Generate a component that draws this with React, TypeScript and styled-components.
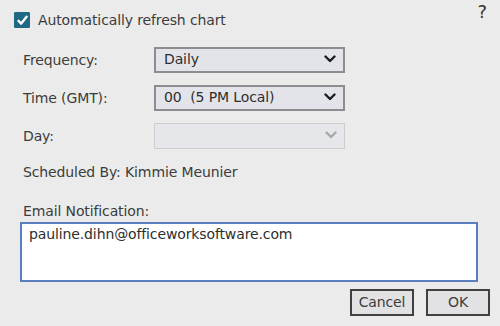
import React, { useState } from 'react';
import styled, { createGlobalStyle } from 'styled-components';

const GlobalStyle = createGlobalStyle`
  html, body {
    margin: 0;
    padding: 0;
    background: #ebebeb;
  }
  body {
    font-family: 'DejaVu Sans', Verdana, sans-serif;
    color: #3c3c3c;
    letter-spacing: -0.12px;
  }
`;

interface SelectProps {
  value: string;
  disabled?: boolean;
}

const Chevron: React.FC<{ disabled?: boolean }> = ({ disabled }) => (
  <svg width="12" height="8" viewBox="0 0 12 8">
    <polyline
      points="1.5,1.5 6,6 10.5,1.5"
      fill="none"
      stroke={disabled ? '#a9a9ab' : '#1c1c1c'}
      strokeWidth="2.4"
      strokeLinecap="round"
      strokeLinejoin="round"
    />
  </svg>
);

const SelectBox: React.FC<SelectProps> = ({ value, disabled }) => (
  <SelectShell disabled={disabled}>
    <SelectValue>{value}</SelectValue>
    <Chevron disabled={disabled} />
  </SelectShell>
);

const App: React.FC = () => {
  const [refresh, setRefresh] = useState(true);

  return (
    <>
      <GlobalStyle />
      <Dialog>
        <Header>
          <CheckLabel onClick={() => setRefresh(!refresh)}>
            <CheckBox checked={refresh}>
              {refresh && (
                <svg width="13" height="13" viewBox="0 0 13 13">
                  <polyline
                    points="2.5,6.8 5.2,9.6 10.6,2.8"
                    fill="none"
                    stroke="#fff"
                    strokeWidth="2.4"
                    strokeLinecap="round"
                    strokeLinejoin="round"
                  />
                </svg>
              )}
            </CheckBox>
            Automatically refresh chart
          </CheckLabel>
          <Help>?</Help>
        </Header>

        <Form>
          <Row>
            <Label>Frequency:</Label>
            <SelectBox value="Daily" />
          </Row>
          <Row>
            <Label>Time (GMT):</Label>
            <SelectBox value={'00\u00a0\u00a0(5 PM Local)'} />
          </Row>
          <Row>
            <Label>Day:</Label>
            <SelectBox value="" disabled />
          </Row>
        </Form>

        <Scheduled>Scheduled By: Kimmie Meunier</Scheduled>

        <EmailLabel>Email Notification:</EmailLabel>
        <EmailBox>pauline.dihn@officeworksoftware.com</EmailBox>

        <Buttons>
          <Button>Cancel</Button>
          <Button>OK</Button>
        </Buttons>
      </Dialog>
    </>
  );
};

const Dialog = styled.div`
  width: 500px;
  height: 326px;
  box-sizing: border-box;
  padding: 0 10px 0 20px;
  display: flex;
  flex-direction: column;
  font-size: 14px;
`;

const Header = styled.div`
  height: 40px;
  margin-left: -6px;
  margin-right: 3px;
  display: flex;
  justify-content: space-between;
  align-items: center;
`;

const CheckLabel = styled.label`
  display: flex;
  align-items: center;
  gap: 8px;
  cursor: pointer;
`;

const CheckBox = styled.span<{ checked: boolean }>`
  width: 16px;
  height: 16px;
  box-sizing: border-box;
  display: flex;
  align-items: center;
  justify-content: center;
  background: ${(p) => (p.checked ? '#1e6a86' : '#fff')};
  border: 1px solid #1e6a86;
  border-radius: 1px;
`;

const Help = styled.span`
  align-self: flex-start;
  margin-top: 1px;
  font-size: 18px;
  line-height: 22px;
  color: #333;
  cursor: pointer;
`;

const Form = styled.div`
  margin-top: 7px;
  padding-left: 3px;
  display: flex;
  flex-direction: column;
  gap: 12px;
`;

const Row = styled.div`
  display: flex;
  align-items: center;
  height: 26px;
`;

const Label = styled.div`
  width: 131px;
`;

const SelectShell = styled.div<{ disabled?: boolean }>`
  width: 191px;
  height: 26px;
  box-sizing: border-box;
  display: flex;
  align-items: center;
  justify-content: space-between;
  padding: 0 7px 2px 8px;
  background: ${(p) => (p.disabled ? '#e6e7ea' : '#e3e4e9')};
  border: ${(p) => (p.disabled ? '1px solid #cdcdcf' : '2px solid #8d8d8f')};
  color: #2e2e2e;
`;

const SelectValue = styled.span`
  white-space: pre;
`;

const Scheduled = styled.div`
  margin-top: 13px;
  padding-left: 3px;
  line-height: 20px;
`;

const EmailLabel = styled.div`
  margin-top: 19px;
  padding-left: 3px;
  line-height: 20px;
`;

const EmailBox = styled.div`
  margin-top: 1px;
  width: 458px;
  height: 60px;
  box-sizing: border-box;
  padding: 2px 7px;
  background: #fff;
  border: 2px solid #5a7dbf;
  color: #2e2e2e;
`;

const Buttons = styled.div`
  margin-top: 7px;
  display: flex;
  justify-content: flex-end;
  gap: 12px;
`;

const Button = styled.button`
  width: 64px;
  height: 27px;
  box-sizing: border-box;
  background: #e2e2e5;
  border: 2px solid #404040;
  font-family: 'DejaVu Sans', Verdana, sans-serif;
  font-size: 14px;
  letter-spacing: -0.12px;
  color: #3c3c3c;
  padding: 0 0 1px;
  cursor: pointer;
`;

export default App;
